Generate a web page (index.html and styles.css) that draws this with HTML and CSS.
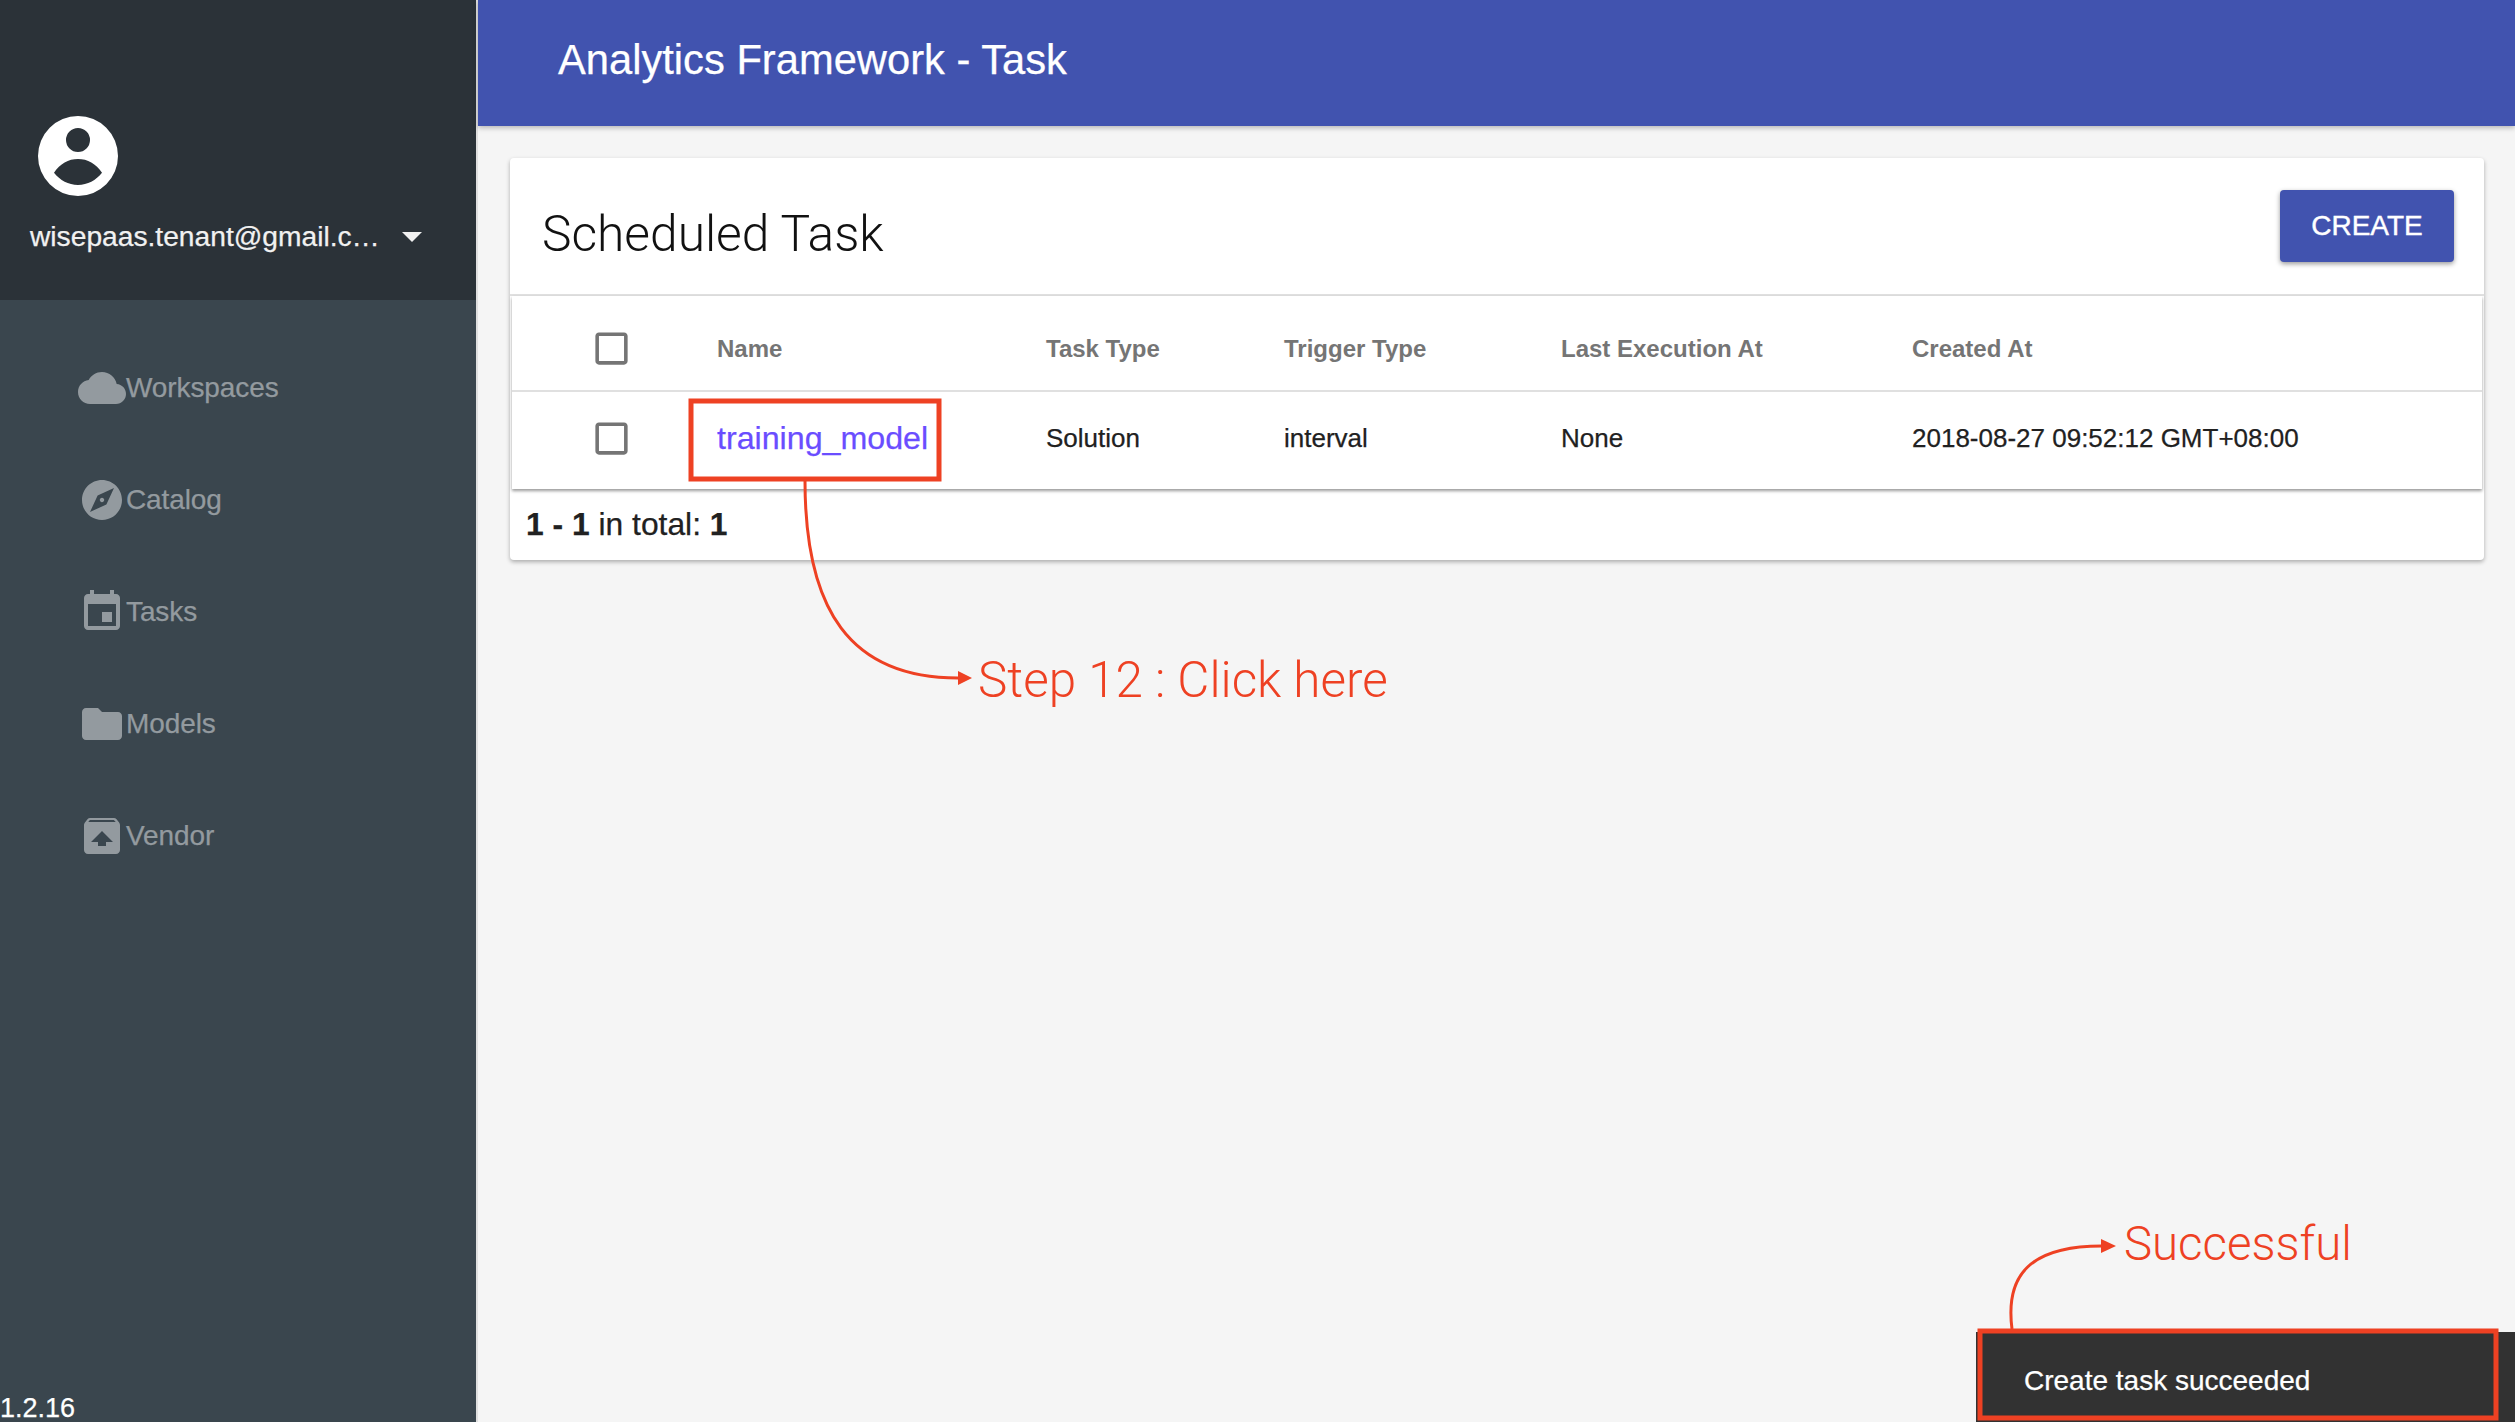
FILE: index.html
```html
<!DOCTYPE html>
<html lang="en">
<head>
<meta charset="utf-8">
<title>Analytics Framework - Task</title>
<link rel="stylesheet" href="styles.css">
</head>
<body>
<div class="app">
  <aside class="sidebar">
    <div class="profile">
      <svg class="avatar" viewBox="0 0 24 24"><path fill-rule="evenodd" d="M12 2a10 10 0 1 0 0 20 10 10 0 0 0 0-20zM12 5a3 3 0 1 1 0 6 3 3 0 0 1 0-6zM6 16.2C7.5 13.9 9.6 12.75 12 12.75s4.5 1.15 6 3.45C16.5 18.1 14.4 19.25 12 19.25S7.5 18.1 6 16.2z"/></svg>
      <div class="account">
        <span class="email">wisepaas.tenant@gmail.c…</span>
        <span class="caret"></span>
      </div>
    </div>
    <nav class="nav">
      <a class="nav-item"><svg class="nav-icon" viewBox="0 0 24 24"><path d="M19.35 10.04C18.67 6.59 15.64 4 12 4 9.11 4 6.6 5.64 5.35 8.04 2.34 8.36 0 10.91 0 14c0 3.31 2.69 6 6 6h13c2.76 0 5-2.24 5-5 0-2.64-2.05-4.78-4.65-4.96z"/></svg><span>Workspaces</span></a>
      <a class="nav-item"><svg class="nav-icon" viewBox="0 0 24 24"><path d="M12 10.9c-.61 0-1.1.49-1.1 1.1s.49 1.1 1.1 1.1c.61 0 1.1-.49 1.1-1.1s-.49-1.1-1.1-1.1zM12 2C6.48 2 2 6.48 2 12s4.48 10 10 10 10-4.48 10-10S17.52 2 12 2zm2.19 12.19L6 18l3.81-8.19L18 6l-3.81 8.19z"/></svg><span>Catalog</span></a>
      <a class="nav-item"><svg class="nav-icon" viewBox="0 0 24 24"><path d="M17 12h-5v5h5v-5zM16 1v2H8V1H6v2H5c-1.11 0-1.99.9-1.99 2L3 19c0 1.1.89 2 2 2h14c1.1 0 2-.9 2-2V5c0-1.1-.9-2-2-2h-1V1h-2zm3 18H5V8h14v11z"/></svg><span>Tasks</span></a>
      <a class="nav-item"><svg class="nav-icon" viewBox="0 0 24 24"><path d="M10 4H4c-1.1 0-1.99.9-1.99 2L2 18c0 1.1.9 2 2 2h16c1.1 0 2-.9 2-2V8c0-1.1-.9-2-2-2h-8l-2-2z"/></svg><span>Models</span></a>
      <a class="nav-item"><svg class="nav-icon" viewBox="0 0 24 24"><path d="M20.55 5.22l-1.39-1.68C18.88 3.21 18.47 3 18 3H6c-.47 0-.88.21-1.15.55L3.46 5.22C3.17 5.57 3 6.01 3 6.5V19c0 1.1.89 2 2 2h14c1.1 0 2-.9 2-2V6.5c0-.49-.17-.93-.45-1.28zM12 9.5l5.5 5.5H14v2h-4v-2H6.5L12 9.5zM5.12 5l.82-1h12l.93 1H5.12z"/></svg><span>Vendor</span></a>
    </nav>
    <div class="version">1.2.16</div>
  </aside>
  <div class="main">
    <header class="topbar">Analytics Framework - Task</header>
    <section class="card">
      <div class="card-head">
        <h1 class="card-title">Scheduled Task</h1>
        <button class="create">CREATE</button>
      </div>
      <div class="table">
        <div class="row row-head">
          <svg class="check" viewBox="0 0 24 24"><path d="M19 5v14H5V5h14m0-2H5c-1.1 0-2 .9-2 2v14c0 1.1.9 2 2 2h14c1.1 0 2-.9 2-2V5c0-1.1-.9-2-2-2z"/></svg>
          <div>Name</div><div>Task Type</div><div>Trigger Type</div><div>Last Execution At</div><div>Created At</div>
        </div>
        <div class="row row-body">
          <svg class="check" viewBox="0 0 24 24"><path d="M19 5v14H5V5h14m0-2H5c-1.1 0-2 .9-2 2v14c0 1.1.9 2 2 2h14c1.1 0 2-.9 2-2V5c0-1.1-.9-2-2-2z"/></svg>
          <div class="task-link">training_model</div><div>Solution</div><div>interval</div><div>None</div><div>2018-08-27 09:52:12 GMT+08:00</div>
        </div>
      </div>
      <div class="card-foot"><b>1 - 1</b> in total: <b>1</b></div>
    </section>
  </div>
</div>
<div class="toast">Create task succeeded</div>
<svg class="markup" viewBox="0 0 2515 1422" width="2515" height="1422">
  <rect class="mark-box" x="691" y="401" width="248" height="78"/>
  <path class="mark-line" d="M805 481C805 610 850 678 958 678"/>
  <path class="mark-head" d="M958 671L972 678L958 685z"/>
  <rect class="mark-box" x="1980" y="1331" width="516" height="87"/>
  <path class="mark-line" d="M2012 1329C2005 1275 2030 1246 2102 1246"/>
  <path class="mark-head" d="M2101 1239L2116 1246L2101 1253z"/>
</svg>
<div class="note note-step">Step 12 : Click here</div>
<div class="note note-ok">Successful</div>
</body>
</html>
```
FILE: styles.css
```css
* { box-sizing: border-box; }
html, body { margin: 0; height: 100%; overflow: hidden; }
body { font-family: "Liberation Sans", Arial, sans-serif; background: #f5f5f5; color: #212121; -webkit-text-stroke: .25px; }
.app { display: flex; height: 1422px; }
.sidebar { width: 478px; flex: none; display: flex; flex-direction: column; background: #3a464e; border-right: 2px solid #dfdfdf; }
.profile { height: 300px; background: #2b3238; padding: 108px 0 0 30px; display: flex; flex-direction: column; }
.avatar { width: 96px; height: 96px; fill: #fff; flex: none; }
.account { display: flex; align-items: center; margin-top: 14px; color: #f1f1f1; font-size: 28.2px; line-height: 36px; }
.email { width: 372px; white-space: nowrap; }
.caret { width: 0; height: 0; margin-top: 2px; border-left: 10px solid transparent; border-right: 10px solid transparent; border-top: 10px solid #f1f1f1; }
.nav { display: flex; flex-direction: column; padding: 32px 0 0 78px; flex: 1; }
.nav-item { height: 112px; display: flex; align-items: center; color: #939a9f; font-size: 28px; letter-spacing: -.1px; }
.nav-icon { width: 48px; height: 48px; fill: #939a9f; flex: none; }
.version { color: #fff; font-size: 27px; line-height: 28px; height: 28px; }
.main { flex: 1; display: flex; flex-direction: column; min-width: 0; }
.topbar { height: 126px; background: #4153af; color: #fff; font-size: 41.7px; line-height: 120px; padding-left: 80px; box-shadow: 0 2px 5px rgba(0,0,0,.25); }
.card { margin: 32px 31px 0 32px; background: #fff; border-radius: 4px; box-shadow: 0 2px 4px rgba(0,0,0,.3); height: 402px; }
.card-head { height: 138px; padding: 32px 30px 0 32px; display: flex; justify-content: space-between; align-items: flex-start; border-bottom: 2px solid #e0e0e0; }
.card-title { margin: 14px 0 0; font-weight: 300; font-family: Roboto, "Liberation Sans", sans-serif; font-size: 49.7px; line-height: 60px; color: #111; -webkit-text-stroke: 0; }
.create { width: 174px; height: 72px; border: 0; border-radius: 4px; background: #4153af; color: #fff; font: 28px "Liberation Sans", Arial, sans-serif; box-shadow: 0 2px 5px rgba(0,0,0,.4); -webkit-text-stroke: .4px; }
.table { margin: 0 2px; box-shadow: 0 2px 3px rgba(0,0,0,.4); }
.row { display: grid; grid-template-columns: 205px 329px 238px 277px 351px 1fr; align-items: center; font-size: 26px; color: #212121; }
.row-head { height: 96px; padding-top: 12px; font-size: 24px; font-weight: 700; color: #757575; border-bottom: 2px solid #e0e0e0; -webkit-text-stroke: 0; }
.row-head .check { margin-top: -2px; }
.row-body { height: 97px; padding-bottom: 4px; }
.check { width: 43px; height: 43px; fill: #757575; margin-left: 78px; }
.task-link { color: #6a4dff; font-size: 32.2px; }
.card-foot { height: 70px; padding: 15px 16px 0; font-size: 31.8px; line-height: 40px; color: #212121; }
.toast { position: absolute; left: 1976px; top: 1332px; width: 539px; height: 90px; background: #323232; color: #fff; font-size: 28px; line-height: 98px; padding-left: 48px; }
.markup { position: absolute; left: 0; top: 0; pointer-events: none; }
.mark-box { fill: none; stroke: #ee4123; stroke-width: 5; }
.mark-line { fill: none; stroke: #ee4123; stroke-width: 3; }
.mark-head { fill: #ee4123; }
.note { position: absolute; color: #ee4123; font-family: Roboto, "Liberation Sans", sans-serif; font-weight: 300; line-height: 60px; white-space: nowrap; -webkit-text-stroke: 0; }
.note-step { left: 978px; top: 650px; font-size: 49.4px; }
.note-ok { left: 2124px; top: 1214px; font-size: 47.4px; }
```
